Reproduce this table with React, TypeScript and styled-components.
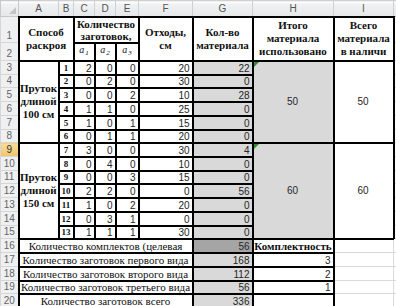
import React from 'react';
import styled, { createGlobalStyle } from 'styled-components';

const GlobalStyle = createGlobalStyle`
  html, body {
    margin: 0;
    padding: 0;
    background: #fff;
  }
  body {
    width: 396px;
    height: 306px;
    overflow: hidden;
  }
`;

type Fill = 'none' | 'light' | 'dark';
type Align = 'left' | 'center' | 'right';

const fills: Record<Fill, string> = {
  none: '#ffffff',
  light: '#d9d9d9',
  dark: '#a5a5a5',
};

const columns = [18, 40, 15, 21, 21, 23, 54, 60, 81, 60, 60];
// the last column only peeks in at the right edge, its letter is off-screen
const letters = ['A', 'B', 'C', 'D', 'E', 'F', 'G', 'H', 'I', ''];

// rows 3..21 share ~13.72px each, spread as whole pixels
const rowHeight = (n: number) => Math.round((n + 1) * 13.72) - Math.round(n * 13.72);

const Sheet = styled.table`
  border-collapse: collapse;
  table-layout: fixed;
  width: ${columns.reduce((a, b) => a + b, 0)}px;
  font-family: "Liberation Serif", "Times New Roman", serif;
`;

const Row = styled.tr<{ $h: number }>`
  height: ${p => p.$h}px;
`;

const Corner = styled.th`
  position: relative;
  padding: 0;
  background: linear-gradient(#fbfbfb 0 2px, #f1f2f3 2px, #e6e7e9);
  border: 1px solid #c8c8c8;
`;

const CornerMark = styled.svg`
  position: absolute;
  right: 2px;
  bottom: 2px;
`;

const ColHead = styled.th`
  padding: 0 0 1px;
  background: linear-gradient(#fbfbfb 0 2px, #f1f2f3 2px, #e6e7e9);
  border: 1px solid #cfcfcf;
  border-bottom-color: #b9b9b9;
  font: normal 10px/12px "Liberation Sans", Arial, sans-serif;
  color: #555;
  text-align: center;
  vertical-align: bottom;
  overflow: hidden;
`;

const RowHead = styled.th<{ $active?: boolean }>`
  padding: 0 0 1px;
  background: ${p => (p.$active ? 'linear-gradient(#f9dc9f, #f2c46a)' : '#eff0f1')};
  border: 1px solid #d6d6d6;
  border-right-color: #b9b9b9;
  font: normal 10px/11px "Liberation Sans", Arial, sans-serif;
  color: ${p => (p.$active ? '#333' : '#666')};
  text-align: center;
  vertical-align: bottom;
`;

const Cell = styled.td<{ $box?: boolean; $fill?: Fill; $align?: Align; $middle?: boolean }>`
  position: relative;
  padding: 0 2px 0 1px;
  border: ${p => (p.$box ? '2px solid #000' : '1px solid #dadada')};
  background: ${p => fills[p.$fill ?? 'none']};
  font: 10px/11px "Liberation Sans", Arial, sans-serif;
  color: #262626;
  text-align: ${p => p.$align ?? 'right'};
  vertical-align: ${p => (p.$middle ? 'middle' : 'bottom')};
  white-space: nowrap;
  overflow: hidden;
`;

const HeadLabel = styled(Cell)`
  padding: 0;
  font: bold 11px/13px "Liberation Serif", "Times New Roman", serif;
  color: #111;
  text-align: center;
  vertical-align: middle;
`;

const CountHead = styled(HeadLabel)`
  line-height: 12px;
`;

const SubHead = styled(Cell)`
  padding: 0 0 1px;
  font: italic 10px/11px "Liberation Serif", "Times New Roman", serif;
  color: #111;
  text-align: center;

  sub {
    font-size: 7px;
    vertical-align: -2px;
    margin-left: 1px;
  }
`;

const IndexCell = styled(Cell)`
  padding: 0 0 1px;
  font: bold 9px/10px "Liberation Serif", "Times New Roman", serif;
  color: #111;
  text-align: center;
`;

const Note = styled(Cell)`
  padding: 0;
  font: 11px/11px "Liberation Serif", "Times New Roman", serif;
  color: #111;
  text-align: center;
`;

const StrongNote = styled(Note)`
  font-weight: bold;
`;

const ErrorMark = styled.span`
  position: absolute;
  top: 0;
  left: 0;
  width: 0;
  height: 0;
  border-top: 5px solid #2f8f2f;
  border-right: 5px solid transparent;
`;

const cuts = [
  [1, 2, 0, 0, 20, 22],
  [2, 0, 2, 0, 30, 0],
  [3, 0, 0, 2, 10, 28],
  [4, 1, 1, 0, 25, 0],
  [5, 1, 0, 1, 15, 0],
  [6, 0, 1, 1, 20, 0],
  [7, 3, 0, 0, 30, 4],
  [8, 0, 4, 0, 10, 0],
  [9, 0, 0, 3, 15, 0],
  [10, 2, 2, 0, 0, 56],
  [11, 1, 0, 2, 20, 0],
  [12, 0, 3, 1, 0, 0],
  [13, 1, 1, 1, 30, 0],
];

const groups: Record<number, { span: number; length: number; used: number; stock: number }> = {
  0: { span: 6, length: 100, used: 50, stock: 50 },
  6: { span: 7, length: 150, used: 60, stock: 60 },
};

const totals = [
  { label: 'Количество заготовок первого вида', count: 168, ratio: 3 },
  { label: 'Количество заготовок второго вида', count: 112, ratio: 2 },
  { label: 'Количество заготовок третьего вида', count: 56, ratio: 1 },
];

const App: React.FC = () => (
  <>
    <GlobalStyle />
    <Sheet>
      <colgroup>
        {columns.map((w, i) => (
          <col key={i} style={{ width: w }} />
        ))}
      </colgroup>
      <tbody>
        <Row $h={16}>
          <Corner>
            <CornerMark width="7" height="7" viewBox="0 0 7 7">
              <polygon points="7,0 7,7 0,7" fill="#c3c3c3" />
            </CornerMark>
          </Corner>
          {letters.map((l, i) => (
            <ColHead key={i}>{l}</ColHead>
          ))}
        </Row>

        <Row $h={26}>
          <RowHead>1</RowHead>
          <HeadLabel $box colSpan={2} rowSpan={2}>
            Способ
            <br />
            раскроя
          </HeadLabel>
          <CountHead $box colSpan={3}>
            Количество
            <br />
            заготовок,
          </CountHead>
          <HeadLabel $box rowSpan={2}>
            Отходы,
            <br />
            см
          </HeadLabel>
          <HeadLabel $box rowSpan={2}>
            Кол-во
            <br />
            материала
          </HeadLabel>
          <HeadLabel $box rowSpan={2}>
            Итого
            <br />
            материала
            <br />
            использовано
          </HeadLabel>
          <HeadLabel $box rowSpan={2}>
            Всего
            <br />
            материала
            <br />в наличи
          </HeadLabel>
          <Cell />
        </Row>

        <Row $h={15}>
          <RowHead>2</RowHead>
          {[1, 2, 3].map(n => (
            <SubHead key={n} $box>
              a<sub>{n}</sub>
            </SubHead>
          ))}
          <Cell />
        </Row>

        {cuts.map(([idx, a1, a2, a3, waste, qty], i) => {
          const group = groups[i];
          const rowNo = i + 3;
          return (
            <Row key={idx} $h={rowHeight(i)}>
              <RowHead $active={rowNo === 9}>{rowNo}</RowHead>
              {group && (
                <HeadLabel $box rowSpan={group.span}>
                  Пруток
                  <br />
                  длиной
                  <br />
                  {group.length} см
                </HeadLabel>
              )}
              <IndexCell $box>{idx}</IndexCell>
              <Cell $box>{a1}</Cell>
              <Cell $box>{a2}</Cell>
              <Cell $box>{a3}</Cell>
              <Cell $box>{waste}</Cell>
              <Cell $box $fill="light">
                {qty}
              </Cell>
              {group && (
                <>
                  <Cell $box $fill="light" $align="center" $middle rowSpan={group.span}>
                    <ErrorMark />
                    {group.used}
                  </Cell>
                  <Cell $box $align="center" $middle rowSpan={group.span}>
                    {group.stock}
                  </Cell>
                </>
              )}
              <Cell />
            </Row>
          );
        })}

        <Row $h={rowHeight(13)}>
          <RowHead>16</RowHead>
          <Note $box colSpan={6}>
            Количество комплектов (целевая
          </Note>
          <Cell $box $fill="dark">
            56
          </Cell>
          <StrongNote $box>Комплектность</StrongNote>
          <Cell />
          <Cell />
        </Row>

        {totals.map((t, i) => (
          <Row key={t.label} $h={rowHeight(14 + i)}>
            <RowHead>{17 + i}</RowHead>
            <Note $box colSpan={6}>
              {t.label}
            </Note>
            <Cell $box $fill="light">
              {t.count}
            </Cell>
            <Cell $box>{t.ratio}</Cell>
            <Cell />
            <Cell />
          </Row>
        ))}

        <Row $h={rowHeight(17)}>
          <RowHead>20</RowHead>
          <Note $box colSpan={6}>
            Количество заготовок всего
          </Note>
          <Cell $box $fill="light">
            336
          </Cell>
          <Cell $box />
          <Cell />
          <Cell />
        </Row>

        <Row $h={rowHeight(18)}>
          <RowHead />
          <Cell colSpan={6} />
          <Cell />
          <Cell />
          <Cell />
          <Cell />
        </Row>
      </tbody>
    </Sheet>
  </>
);

export default App;
